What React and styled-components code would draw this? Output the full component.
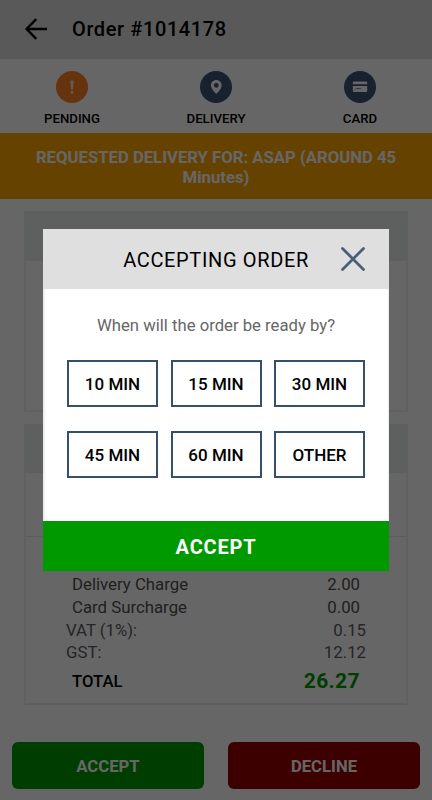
import styled, { createGlobalStyle } from 'styled-components';

const App = () => {
    const statuses=[
        { label:'PENDING', icon:<PendingIcon />, color:'#ff7f27' },
        { label:'DELIVERY', icon:<PinIcon />, color:'#3c5675' },
        { label:'CARD', icon:<CardIcon />, color:'#3c5675' }
    ];
    const charges=[
        { title:'Delivery Charge', value:'2.00' },
        { title:'Card Surcharge', value:'0.00' },
        { title:'VAT (1%):', value:'0.15', tax:true },
        { title:'GST:', value:'12.12', tax:true }
    ];
    const times=['10 MIN','15 MIN','30 MIN','45 MIN','60 MIN','OTHER'];
    return (
        <>
            <GlobalStyle />
            <Page>
                <Header>
                    <BackIcon />
                    <h1>Order #1014178</h1>
                </Header>
                <StatusBar>
                    {
                        statuses.map((item)=>(
                            <Status key={item.label}>
                                <Badge $color={item.color}>{item.icon}</Badge>
                                <span>{item.label}</span>
                            </Status>
                        ))
                    }
                </StatusBar>
                <Banner>REQUESTED DELIVERY FOR: ASAP (AROUND 45 Minutes)</Banner>
                <Cards>
                    <Card $height={201}>
                        <CardHead $height={50} />
                    </Card>
                    <Card $height={281}>
                        <CardHead $height={49} />
                        <Items />
                        <Charges>
                            {
                                charges.map((item)=>(
                                    <ChargeRow key={item.title} $tax={item.tax}>
                                        <span>{item.title}</span>
                                        <span>{item.value}</span>
                                    </ChargeRow>
                                ))
                            }
                            <TotalRow>
                                <span>TOTAL</span>
                                <strong>26.27</strong>
                            </TotalRow>
                        </Charges>
                    </Card>
                </Cards>
                <Actions>
                    <ActionButton $color='#009900'>ACCEPT</ActionButton>
                    <ActionButton $color='#990000'>DECLINE</ActionButton>
                </Actions>
            </Page>
            <Overlay>
                <Modal>
                    <ModalHeader>
                        <h2>ACCEPTING ORDER</h2>
                        <CloseIcon />
                    </ModalHeader>
                    <ModalBody>
                        <p>When will the order be ready by?</p>
                        <TimeGrid>
                            {
                                times.map((time)=>(
                                    <TimeButton key={time}>{time}</TimeButton>
                                ))
                            }
                        </TimeGrid>
                    </ModalBody>
                    <ModalAccept>ACCEPT</ModalAccept>
                </Modal>
            </Overlay>
        </>
    )
}

const BackIcon = () => (
    <svg width="24" height="24" viewBox="0 0 24 24" fill="none" stroke="#000" strokeWidth="2.4">
        <path d="M23 12H3M12.2 2.2L2.6 12l9.6 9.8" />
    </svg>
)

const PendingIcon = () => (
    <svg width="32" height="32" viewBox="0 0 32 32" fill="#ffe3cc">
        <path d="M14.300 9.400h3.400l-.8 9.200h-1.800z" />
        <circle cx="16" cy="21.500" r="1.500" />
    </svg>
)

const PinIcon = () => (
    <svg width="32" height="32" viewBox="0 0 32 32" fill="#fff" fillRule="evenodd">
        <path d="M16.3 9c-3.1 0-5.4 2.3-5.4 5.3 0 3.8 5.4 8.6 5.4 8.6s5.4-4.8 5.4-8.6c0-3-2.3-5.3-5.4-5.3zm0 2.9a2.4 2.4 0 1 1 0 4.8 2.4 2.4 0 0 1 0-4.8z" />
    </svg>
)

const CardIcon = () => (
    <svg width="32" height="32" viewBox="0 0 32 32">
        <path d="M8.8 11.6a1 1 0 0 1 1-1h12.4a1 1 0 0 1 1 1v1.6H8.8zM8.8 15h14.4v5a1 1 0 0 1-1 1H9.8a1 1 0 0 1-1-1z" fill="#fff" />
        <path d="M10.8 19.3v-.8M11.5 17.6h5.5" stroke="#3c5675" strokeWidth=".7" />
    </svg>
)

const CloseIcon = () => (
    <svg width="26" height="26" viewBox="0 0 26 26" fill="none" stroke="#4b6078" strokeWidth="2.8" strokeLinecap="round">
        <path d="M2.5 2.5l21 21M23.5 2.5l-21 21" />
    </svg>
)

const GlobalStyle=createGlobalStyle`
    *{
        box-sizing:border-box;
    }
    body{
        margin:0;
        font-family:Roboto, "Liberation Sans", sans-serif;
        overflow:hidden;
    }
    h1,h2,p{
        margin:0;
    }
    svg{
        display:block;
        flex-shrink:0;
    }
    button{
        font-family:inherit;
        border:none;
        padding:0;
    }
`;

const Page=styled.div`
    display:flex;
    flex-direction:column;
    height:100vh;
    background:white;
`;
const Header=styled.div`
    display:flex;
    align-items:center;
    height:59px;
    flex-shrink:0;
    padding:0 0 1px 24px;
    gap:24px;
    background:#dfdfdf;
    > h1{
        font-size:20px;
        font-weight:500;
        letter-spacing:0.6px;
    }
`;
const StatusBar=styled.div`
    display:grid;
    grid-template-columns:repeat(3,1fr);
    height:74px;
    flex-shrink:0;
    padding-top:12px;
`;
const Status=styled.div`
    display:flex;
    flex-direction:column;
    align-items:center;
    gap:8px;
    font-size:13.2px;
    font-weight:500;
    line-height:16px;
`;
const Badge=styled.div`
    width:32px;
    height:32px;
    border-radius:50%;
    background:${props=>props.$color};
`;
const Banner=styled.div`
    height:66px;
    flex-shrink:0;
    padding:15px 24px 0;
    background:#ffa500;
    color:white;
    font-size:16.7px;
    font-weight:700;
    line-height:20px;
    text-align:center;
`;
const Cards=styled.div`
    display:flex;
    flex-direction:column;
    gap:12px;
    padding:12px 24px 0;
`;
const Card=styled.div`
    height:${props=>props.$height}px;
    border:2px solid #f0f0f0;
    border-top:none;
`;
const CardHead=styled.div`
    height:${props=>props.$height}px;
    margin:0 -2px;
    background:#ecf0ef;
`;
const Items=styled.div`
    height:64px;
    border-bottom:1px solid #e9e9e9;
`;
const Charges=styled.div`
    padding:36px 40px 0;
`;
const ChargeRow=styled.div`
    display:flex;
    justify-content:space-between;
    padding:0 ${props=>props.$tax?0:6}px;
    color:${props=>props.$tax?'#5c5c66':'#505050'};
    font-size:16.8px;
    line-height:22.8px;
`;
const TotalRow=styled.div`
    display:flex;
    justify-content:space-between;
    align-items:center;
    padding:0 6px;
    font-size:16.7px;
    font-weight:500;
    line-height:32px;
    > span{
        padding-top:2px;
    }
    > strong{
        color:#009900;
        font-size:21px;
        font-weight:700;
        letter-spacing:0.4px;
    }
`;
const Actions=styled.div`
    display:grid;
    grid-template-columns:1fr 1fr;
    gap:24px;
    margin-top:auto;
    padding:0 12px 11px;
`;
const ActionButton=styled.button`
    height:47px;
    padding-top:2px;
    border-radius:6px;
    background:${props=>props.$color};
    color:white;
    font-size:16.7px;
    font-weight:700;
`;

const Overlay=styled.div`
    position:fixed;
    inset:0;
    display:flex;
    justify-content:center;
    align-items:center;
    background:rgba(0, 0, 0, 0.6);
`;
const Modal=styled.div`
    width:346px;
    background:white;
`;
const ModalHeader=styled.div`
    display:flex;
    align-items:center;
    justify-content:flex-end;
    gap:31px;
    height:60px;
    padding-right:23px;
    background:#dfdfdf;
    > h2{
        padding-top:1px;
        font-size:20px;
        font-weight:400;
        letter-spacing:0.65px;
    }
`;
const ModalBody=styled.div`
    height:232px;
    padding:25px 24px 0;
    box-shadow:inset 2px 0 1px #eee, inset -1px 0 1px #eee;
    > p{
        color:#666;
        font-size:16.7px;
        line-height:24px;
        text-align:center;
    }
`;
const TimeGrid=styled.div`
    display:grid;
    grid-template-columns:repeat(3,91px);
    justify-content:space-between;
    row-gap:24px;
    padding-top:22px;
`;
const TimeButton=styled.button`
    height:47px;
    border:2px solid #34506a;
    background:white;
    color:black;
    font-size:17px;
    font-weight:500;
`;
const ModalAccept=styled.button`
    display:block;
    width:100%;
    height:50px;
    padding-top:2px;
    background:#009900;
    color:white;
    font-size:20px;
    font-weight:700;
    letter-spacing:0.8px;
`;

export default App
